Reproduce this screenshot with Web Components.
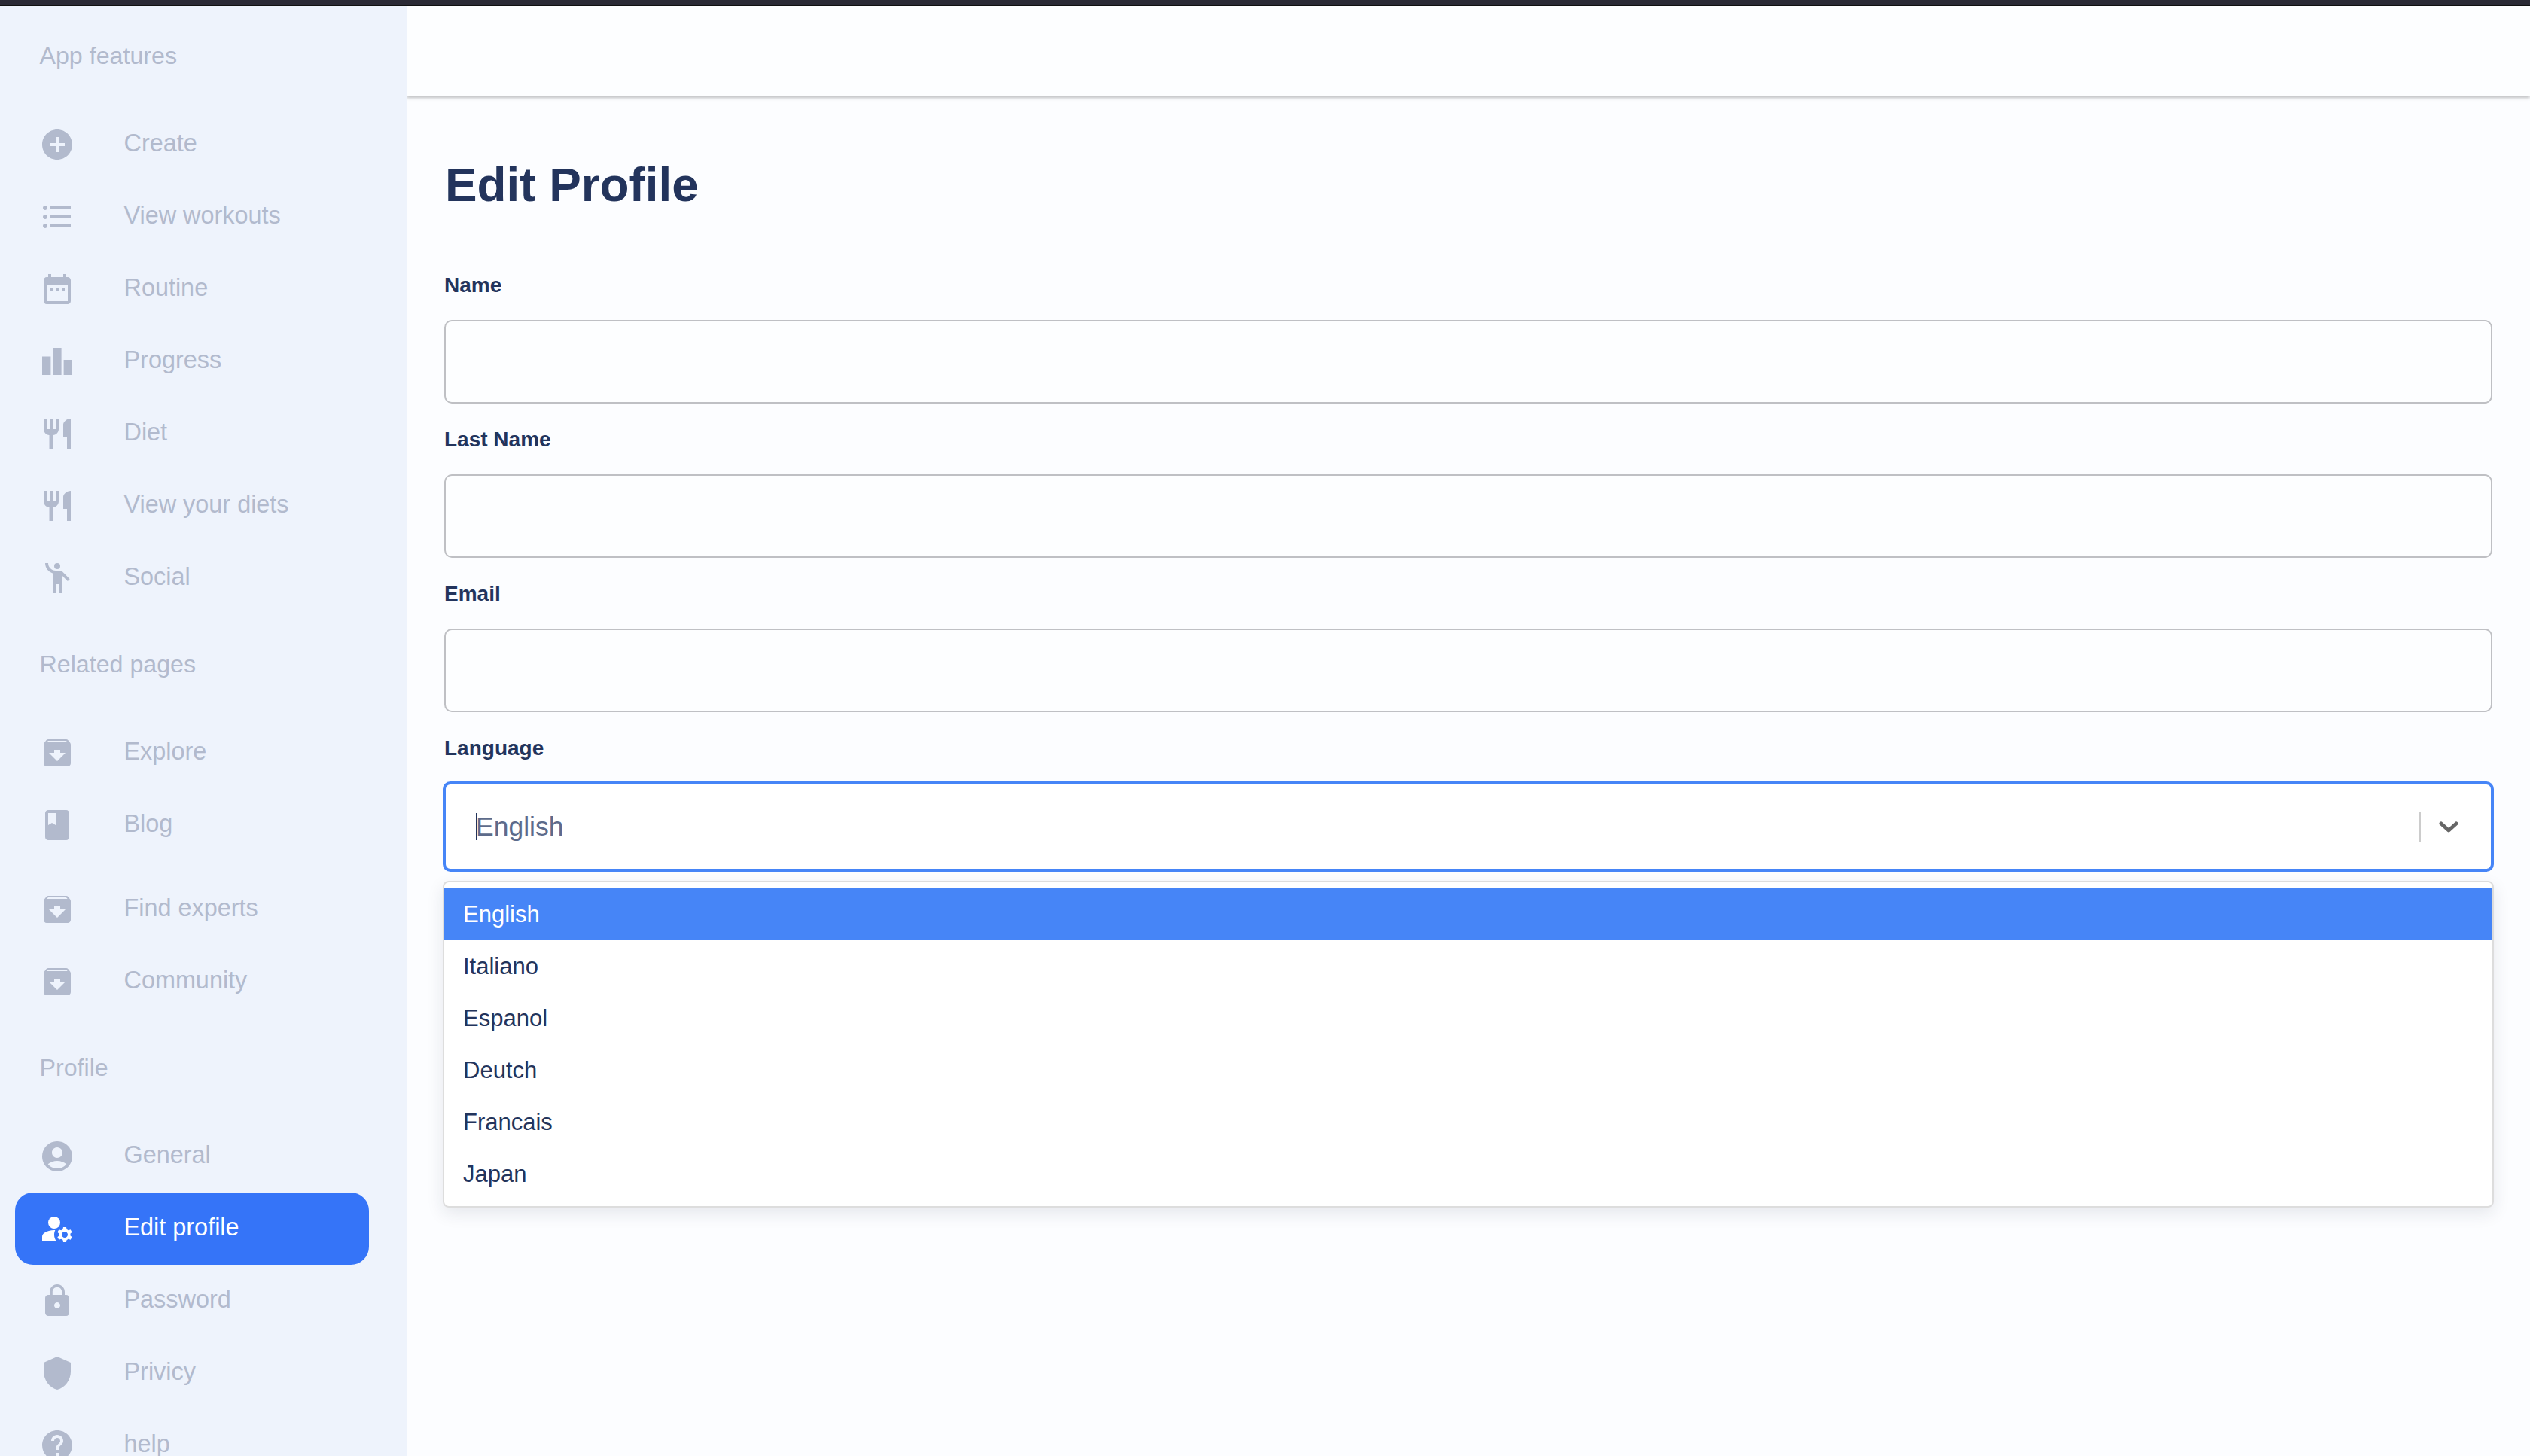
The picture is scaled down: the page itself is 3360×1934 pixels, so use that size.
<!DOCTYPE html>
<html lang="en">
<head>
<meta charset="utf-8">
<title>Edit Profile</title>
<style>
  html, body {
    margin: 0;
    height: 100%;
    overflow: hidden;
    background: #fcfdff;
    font-family: "Liberation Sans", Arial, sans-serif;
  }
</style>
</head>
<body>
<app-shell>
  <side-bar slot="side">
    <nav-title>App features</nav-title>
    <nav-item icon="add">Create</nav-item>
    <nav-item icon="list">View workouts</nav-item>
    <nav-item icon="calendar">Routine</nav-item>
    <nav-item icon="bars">Progress</nav-item>
    <nav-item icon="food">Diet</nav-item>
    <nav-item icon="food">View your diets</nav-item>
    <nav-item icon="person">Social</nav-item>
    <nav-title>Related pages</nav-title>
    <nav-item icon="archive">Explore</nav-item>
    <nav-item icon="book">Blog</nav-item>
    <nav-item icon="archive" style="margin-top: 16px">Find experts</nav-item>
    <nav-item icon="archive">Community</nav-item>
    <nav-title>Profile</nav-title>
    <nav-item icon="account">General</nav-item>
    <nav-item icon="manage" active>Edit profile</nav-item>
    <nav-item icon="lock">Password</nav-item>
    <nav-item icon="shield">Privicy</nav-item>
    <nav-item icon="help">help</nav-item>
  </side-bar>
  <edit-form>
    <form-field label="Name"><text-box></text-box></form-field>
    <form-field label="Last Name"><text-box></text-box></form-field>
    <form-field label="Email"><text-box></text-box></form-field>
    <form-field label="Language">
      <lang-select value="English">
        <lang-option selected>English</lang-option>
        <lang-option>Italiano</lang-option>
        <lang-option>Espanol</lang-option>
        <lang-option>Deutch</lang-option>
        <lang-option>Francais</lang-option>
        <lang-option>Japan</lang-option>
      </lang-select>
    </form-field>
  </edit-form>
</app-shell>

<script>
const ICONS = {
  add: `<path d="M12 2C6.48 2 2 6.48 2 12s4.48 10 10 10 10-4.48 10-10S17.52 2 12 2zm5 11h-4v4h-2v-4H7v-2h4V7h2v4h4v2z"/>`,
  list: `<path d="M4 10.5c-.83 0-1.5.67-1.5 1.5s.67 1.5 1.5 1.5 1.5-.67 1.5-1.5-.67-1.5-1.5-1.5zm0-6c-.83 0-1.5.67-1.5 1.5S3.17 7.5 4 7.5 5.5 6.83 5.5 6 4.83 4.5 4 4.5zm0 12c-.83 0-1.5.68-1.5 1.5s.68 1.5 1.5 1.5 1.5-.68 1.5-1.5-.67-1.5-1.5-1.5zM7 19h14v-2H7v2zm0-6h14v-2H7v2zm0-8v2h14V5H7z"/>`,
  calendar: `<path d="M9 11H7v2h2v-2zm4 0h-2v2h2v-2zm4 0h-2v2h2v-2zm2-7h-1V2h-2v2H8V2H6v2H5c-1.11 0-1.99.9-1.99 2L3 20c0 1.1.89 2 2 2h14c1.1 0 2-.9 2-2V6c0-1.1-.9-2-2-2zm0 16H5V9h14v11z"/>`,
  bars: `<path d="M2 8.7h5.7V21H2zM9.2 3h5.6v18H9.2zM16.3 11H22v10h-5.7z"/>`,
  food: `<path d="M11 9H9V2H7v7H5V2H3v7c0 2.12 1.66 3.84 3.75 3.97V22h2.5v-9.03C11.34 12.84 13 11.12 13 9V2h-2v7zm5-3v8h2.5v8H21V2c-2.76 0-5 2.24-5 4z"/>`,
  person: `<circle cx="12" cy="4" r="2"/><path d="M15.89 8.11C15.5 7.72 14.83 7 13.53 7c-.21 0-1.42 0-2.54 0C8.24 6.99 6 4.75 6 2H4c0 3.16 2.11 5.84 5 6.71V22h2v-6h2v6h2V10.05L18.95 14l1.41-1.41-4.47-4.48z"/>`,
  archive: `<path d="M20.54 5.23l-1.39-1.68C18.88 3.21 18.47 3 18 3H6c-.47 0-.88.21-1.16.55L3.46 5.23C3.17 5.57 3 6.02 3 6.5V19c0 1.1.9 2 2 2h14c1.1 0 2-.9 2-2V6.5c0-.48-.17-.93-.46-1.27zM12 17.5L6.5 12H10v-2h4v2h3.5L12 17.5zM5.12 5l.81-1h12l.94 1H5.12z"/>`,
  book: `<path d="M18 2H6c-1.1 0-2 .9-2 2v16c0 1.1.9 2 2 2h12c1.1 0 2-.9 2-2V4c0-1.1-.9-2-2-2zM6 4h5v8l-2.5-1.5L6 12V4z"/>`,
  account: `<path d="M12 2C6.48 2 2 6.48 2 12s4.48 10 10 10 10-4.48 10-10S17.52 2 12 2zm0 4c1.93 0 3.5 1.57 3.5 3.5S13.93 13 12 13s-3.5-1.57-3.5-3.5S10.07 6 12 6zm0 14c-2.03 0-4.43-.82-6.14-2.88C7.55 15.8 9.68 15 12 15s4.45.8 6.14 2.12C16.43 19.18 14.03 20 12 20z"/>`,
  manage: `<circle cx="10" cy="8" r="4"/><path d="M10.67 13.02C10.45 13.01 10.23 13 10 13c-2.42 0-4.68.67-6.61 1.82C2.51 15.34 2 16.32 2 17.35V20h9.26C10.47 18.87 10 17.49 10 16c0-1.07.25-2.07.67-2.98z"/><path d="M20.75 16c0-.22-.03-.42-.06-.63l1.14-1.01-1-1.73-1.45.49c-.32-.27-.68-.48-1.08-.63L18 11h-2l-.3 1.49c-.4.15-.76.36-1.08.63l-1.45-.49-1 1.73 1.14 1.01c-.03.21-.06.41-.06.63s.03.42.06.63l-1.14 1.01 1 1.73 1.45-.49c.32.27.68.48 1.08.63L16 21h2l.3-1.49c.4-.15.76-.36 1.08-.63l1.45.49 1-1.73-1.14-1.01c.03-.21.06-.41.06-.63zM17 18c-1.1 0-2-.9-2-2s.9-2 2-2 2 .9 2 2-.9 2-2 2z"/>`,
  lock: `<path d="M18 8h-1V6c0-2.76-2.24-5-5-5S7 3.24 7 6v2H6c-1.1 0-2 .9-2 2v10c0 1.1.9 2 2 2h12c1.1 0 2-.9 2-2V10c0-1.1-.9-2-2-2zm-6 9c-1.1 0-2-.9-2-2s.9-2 2-2 2 .9 2 2-.9 2-2 2zm3.1-9H8.9V6c0-1.71 1.39-3.1 3.1-3.1 1.71 0 3.1 1.39 3.1 3.1v2z"/>`,
  shield: `<path d="M12 1L3 5v6c0 5.55 3.84 10.74 9 12 5.16-1.26 9-6.45 9-12V5l-9-4z"/>`,
  help: `<path d="M12 2C6.48 2 2 6.48 2 12s4.48 10 10 10 10-4.48 10-10S17.52 2 12 2zm1 17h-2v-2h2v2zm2.07-7.75l-.9.92C13.45 12.9 13 13.5 13 15h-2v-.5c0-1.1.45-2.1 1.17-2.83l1.24-1.26c.37-.36.59-.86.59-1.41 0-1.1-.9-2-2-2s-2 .9-2 2H8c0-2.21 1.79-4 4-4s4 1.79 4 4c0 .88-.36 1.68-.93 2.25z"/>`
};

class AppShell extends HTMLElement {
  connectedCallback() {
    this.attachShadow({ mode: "open" });
    this.shadowRoot.innerHTML = `
      <style>
        :host {
          display: flex;
          flex-direction: column;
          height: 100vh;
          overflow: hidden;
        }
        #strip {
          background: #2b2a35;
          border-bottom: 2px solid #111;
          flex: none;
          height: 6px;
        }
        #body {
          display: flex;
          flex: 1;
          min-height: 0;
        }
        #main {
          display: flex;
          flex: 1;
          flex-direction: column;
          min-width: 0;
        }
        #header {
          background: #fdfeff;
          box-shadow: 0 2px 4px rgba(0, 0, 0, 0.25);
          flex: none;
          height: 120px;
        }
      </style>
      <div id="strip"></div>
      <div id="body">
        <slot name="side"></slot>
        <div id="main">
          <div id="header"></div>
          <slot></slot>
        </div>
      </div>
    `;
  }
}

class SideBar extends HTMLElement {
  connectedCallback() {
    this.attachShadow({ mode: "open" });
    this.shadowRoot.innerHTML = `
      <style>
        :host {
          background: #eef3fc;
          display: block;
          flex: none;
          overflow: hidden;
          position: relative;
          width: 540px;
          z-index: 1;
        }
      </style>
      <slot></slot>
    `;
  }
}

class NavTitle extends HTMLElement {
  connectedCallback() {
    this.attachShadow({ mode: "open" });
    this.shadowRoot.innerHTML = `
      <style>
        :host {
          color: #b2bacd;
          display: block;
          font-size: 32.2px;
          height: 136px;
          line-height: 132px;
          padding-left: 52.5px;
        }
      </style>
      <slot></slot>
    `;
  }
}

class NavItem extends HTMLElement {
  connectedCallback() {
    this.attachShadow({ mode: "open" });
    const active = this.hasAttribute("active");
    this.shadowRoot.innerHTML = `
      <style>
        :host {
          align-items: center;
          background: ${active ? "#3574f8" : "transparent"};
          border-radius: 24px;
          box-sizing: border-box;
          color: ${active ? "#fff" : "#b2bacd"};
          display: flex;
          font-size: 32.4px;
          height: 96px;
          margin: 0 50px 0 20px;
          padding-left: 32px;
        }
        svg {
          fill: currentColor;
          flex: none;
          height: 48px;
          width: 48px;
        }
        span {
          margin-left: 64.5px;
          padding-bottom: 4px;
        }
      </style>
      <svg viewBox="0 0 24 24">${ICONS[this.getAttribute("icon")]}</svg>
      <span><slot></slot></span>
    `;
  }
}

class EditForm extends HTMLElement {
  connectedCallback() {
    this.attachShadow({ mode: "open" });
    this.shadowRoot.innerHTML = `
      <style>
        :host {
          display: block;
          padding: 81px 50px 0 50px;
        }
        h1 {
          color: #23345c;
          font-size: 63.8px;
          font-weight: bold;
          line-height: 72px;
          margin: 0 0 81.5px 1px;
        }
      </style>
      <h1>Edit Profile</h1>
      <slot></slot>
    `;
  }
}

class FormField extends HTMLElement {
  connectedCallback() {
    this.attachShadow({ mode: "open" });
    this.shadowRoot.innerHTML = `
      <style>
        :host {
          display: block;
          margin-bottom: 31.5px;
        }
        label {
          color: #23345c;
          display: block;
          font-size: 28px;
          font-weight: bold;
          line-height: 32px;
          margin-bottom: 30.5px;
        }
      </style>
      <label>${this.getAttribute("label")}</label>
      <slot></slot>
    `;
  }
}

class TextBox extends HTMLElement {
  connectedCallback() {
    this.attachShadow({ mode: "open" });
    this.shadowRoot.innerHTML = `
      <style>
        :host {
          display: block;
        }
        input {
          background: #fdfeff;
          border: 2px solid #bfc0c4;
          border-radius: 10px;
          box-sizing: border-box;
          display: block;
          font: 35px "Liberation Sans", Arial, sans-serif;
          height: 111px;
          outline: none;
          width: 100%;
        }
      </style>
      <input type="text">
    `;
  }
}

class LangSelect extends HTMLElement {
  connectedCallback() {
    this.attachShadow({ mode: "open" });
    this.shadowRoot.innerHTML = `
      <style>
        :host {
          display: block;
          margin: -2px -2px 0;
          position: relative;
        }
        #control {
          align-items: center;
          background: #fff;
          border: 4px solid #4685f7;
          border-radius: 10px;
          box-sizing: border-box;
          display: flex;
          height: 120px;
        }
        #value {
          color: #5d6b8b;
          flex: 1;
          font-size: 35.5px;
          margin-left: 40px;
          position: relative;
        }
        #caret {
          background: #23345c;
          height: 36px;
          left: 0;
          position: absolute;
          top: 2px;
          width: 2px;
        }
        #sep {
          background: #ccc;
          flex: none;
          height: 40px;
          width: 2px;
        }
        svg {
          flex: none;
          height: 16px;
          margin: 2px 43px 0 24px;
          width: 26px;
        }
        #menu {
          background: #fff;
          border: 2px solid #ddd;
          border-radius: 8px;
          box-shadow: 0 8px 22px rgba(30, 40, 70, 0.1);
          box-sizing: border-box;
          left: 0;
          padding: 8px 0;
          position: absolute;
          right: 0;
          top: 132px;
          z-index: 2;
        }
      </style>
      <div id="control">
        <div id="value"><span id="caret"></span>${this.getAttribute("value")}</div>
        <div id="sep"></div>
        <svg viewBox="0 0 26 16"><path d="M3 3l10 9 10-9" fill="none" stroke="#666" stroke-width="5" stroke-linecap="round" stroke-linejoin="round"/></svg>
      </div>
      <div id="menu"><slot></slot></div>
    `;
  }
}

class LangOption extends HTMLElement {
  connectedCallback() {
    this.attachShadow({ mode: "open" });
    const selected = this.hasAttribute("selected");
    this.shadowRoot.innerHTML = `
      <style>
        :host {
          background: ${selected ? "#4685f7" : "transparent"};
          color: ${selected ? "#fff" : "#23345c"};
          display: block;
          font-size: 31px;
          line-height: 69px;
          padding-left: 25px;
        }
      </style>
      <slot></slot>
    `;
  }
}

customElements.define("app-shell", AppShell);
customElements.define("side-bar", SideBar);
customElements.define("nav-title", NavTitle);
customElements.define("nav-item", NavItem);
customElements.define("edit-form", EditForm);
customElements.define("form-field", FormField);
customElements.define("text-box", TextBox);
customElements.define("lang-select", LangSelect);
customElements.define("lang-option", LangOption);
</script>
</body>
</html>
